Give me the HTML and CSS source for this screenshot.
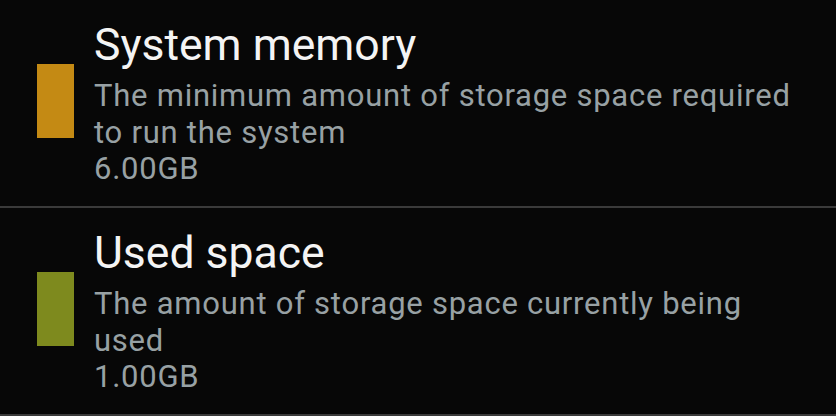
FILE: index.html
```html
<!DOCTYPE html>
<html>
<head>
<meta charset="utf-8">
<link rel="stylesheet" href="styles.css">
</head>
<body>
<div class="list">
  <div class="row">
    <div class="swatch swatch-system"></div>
    <div class="text">
      <div class="title">System memory</div>
      <div class="summary">The minimum amount of storage space required to run the system</div>
      <div class="summary">6.00GB</div>
    </div>
  </div>
  <div class="row">
    <div class="swatch swatch-used"></div>
    <div class="text">
      <div class="title">Used space</div>
      <div class="summary">The amount of storage space currently being used</div>
      <div class="summary">1.00GB</div>
    </div>
  </div>
</div>
</body>
</html>
```
FILE: styles.css
```css
html, body {
  margin: 0;
  padding: 0;
  background: #070707;
  width: 836px;
  height: 416px;
  overflow: hidden;
}
.list {
  display: flex;
  flex-direction: column;
}
.row {
  height: 194px;
  border-bottom: 2px solid #3a3a3a;
  display: flex;
  align-items: flex-start;
  padding-top: 12px;
  padding-left: 37px;
  gap: 20px;
  box-sizing: content-box;
}
.swatch {
  width: 37px;
  height: 74px;
  margin-top: 52px;
  flex: none;
}
.swatch-system { background: #c48a14; }
.swatch-used { background: #7e8a1e; }
.text {
  font-family: Roboto, "Noto Sans", sans-serif;
  width: 710px;
}
.title {
  color: #f4f4f4;
  font-size: 44.5px;
  line-height: 66px;
}
.summary {
  color: #98a1a4;
  font-size: 31px;
  line-height: 36.5px;
  letter-spacing: 0.75px;
}
```
